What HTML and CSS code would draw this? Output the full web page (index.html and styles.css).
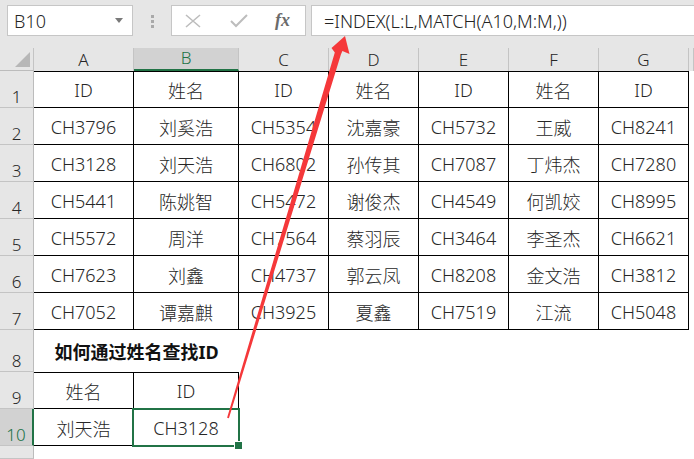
FILE: index.html
```
<!DOCTYPE html>
<html lang="zh">
<head>
    <meta charset="UTF-8">
    <title>INDEX MATCH</title>
    <link rel="stylesheet" href="styles.css">
</head>
<body>
<div class="toolbar">
    <div class="namebox">
        <span>B10</span>
        <svg class="caret" width="8" height="5" viewBox="0 0 8 5"><path d="M0 0H8L4 5Z" fill="#7a7a7a"/></svg>
    </div>
    <div class="grip"><i></i><i></i><i></i></div>
    <div class="fxbox">
        <svg width="16" height="14" viewBox="0 0 16 14"><path d="M1 1L15 13M15 1L1 13" stroke="#bdbdbd" stroke-width="1.6" fill="none"/></svg>
        <svg width="18" height="14" viewBox="0 0 18 14"><path d="M1 7L6 12L17 1" stroke="#bdbdbd" stroke-width="2" fill="none"/></svg>
        <span class="fx">fx</span>
    </div>
    <div class="formula">=INDEX(L:L,MATCH(A10,M:M,))</div>
</div>

<div class="sheet">
    <div class="corner"><span class="tri"></span></div>
    <div class="colhead">A</div>
    <div class="colhead active">B</div>
    <div class="colhead">C</div>
    <div class="colhead">D</div>
    <div class="colhead">E</div>
    <div class="colhead">F</div>
    <div class="colhead">G</div>
    <div class="colhead"></div>

    <div class="rowhead">1</div>
    <div class="c first">ID</div><div class="c first">姓名</div><div class="c first">ID</div><div class="c first">姓名</div><div class="c first">ID</div><div class="c first">姓名</div><div class="c first">ID</div><div class="e"></div>

    <div class="rowhead">2</div>
    <div class="c">CH3796</div><div class="c">刘奚浩</div><div class="c">CH5354</div><div class="c">沈嘉豪</div><div class="c">CH5732</div><div class="c">王威</div><div class="c">CH8241</div><div class="e"></div>

    <div class="rowhead">3</div>
    <div class="c">CH3128</div><div class="c">刘天浩</div><div class="c">CH6802</div><div class="c">孙传其</div><div class="c">CH7087</div><div class="c">丁炜杰</div><div class="c">CH7280</div><div class="e"></div>

    <div class="rowhead">4</div>
    <div class="c">CH5441</div><div class="c">陈姚智</div><div class="c">CH5472</div><div class="c">谢俊杰</div><div class="c">CH4549</div><div class="c">何凯姣</div><div class="c">CH8995</div><div class="e"></div>

    <div class="rowhead">5</div>
    <div class="c">CH5572</div><div class="c">周洋</div><div class="c">CH7564</div><div class="c">蔡羽辰</div><div class="c">CH3464</div><div class="c">李圣杰</div><div class="c">CH6621</div><div class="e"></div>

    <div class="rowhead">6</div>
    <div class="c">CH7623</div><div class="c">刘鑫</div><div class="c">CH4737</div><div class="c">郭云凤</div><div class="c">CH8208</div><div class="c">金文浩</div><div class="c">CH3812</div><div class="e"></div>

    <div class="rowhead">7</div>
    <div class="c">CH7052</div><div class="c">谭嘉麒</div><div class="c">CH3925</div><div class="c">夏鑫</div><div class="c">CH7519</div><div class="c">江流</div><div class="c">CH5048</div><div class="e"></div>

    <div class="rowhead">8</div>
    <div class="title">如何通过姓名查找ID</div>
    <div class="e wide"></div>

    <div class="rowhead">9</div>
    <div class="c left first">姓名</div><div class="c first">ID</div>
    <div class="e wide"></div>

    <div class="rowhead active">10</div>
    <div class="c left">刘天浩</div><div class="c selected">CH3128</div>
    <div class="e wide"></div>

    <div class="rowhead"></div>
    <div class="e full"></div>
</div>

<svg class="arrow" width="694" height="459" viewBox="0 0 694 459">
    <polygon fill="#f5383a" points="345,36 349.5,54 342.4,51 340.9,54.6 228.9,418.3 227.1,417.7 334.8,52.5 331.5,48"/>
</svg>
</body>
</html>
```
FILE: styles.css
```
body {
    margin: 0;
    width: 694px;
    height: 459px;
    overflow: hidden;
    position: relative;
    background: #fff;
    font-family: "Noto Sans", "Noto Sans CJK SC", sans-serif;
    color: #262626;
}
.toolbar {
    height: 48px;
    box-sizing: border-box;
    padding: 5px 0 0 7px;
    background: #e6e6e6;
    display: flex;
    align-items: flex-start;
}
.namebox, .fxbox, .formula {
    height: 31px;
    box-sizing: border-box;
    background: #fff;
    border: 1px solid #c6c6c6;
    display: flex;
    align-items: center;
}
.namebox {
    width: 126px;
    padding: 0 9px 0 6px;
    justify-content: space-between;
    font-size: 18px;
    font-weight: 300;
}
.grip {
    width: 38px;
    display: flex;
    flex-direction: column;
    align-items: center;
    gap: 2px;
    padding-top: 10px;
}
.grip i {
    width: 3px;
    height: 3px;
    background: #a9a9a9;
}
.fxbox {
    width: 135px;
    padding-left: 13px;
    gap: 29px;
}
.fx {
    font-family: "Liberation Serif", serif;
    font-style: italic;
    font-weight: bold;
    font-size: 18px;
    color: #6b6b6b;
    margin-left: -2px;
}
.formula {
    flex: 1;
    margin-left: 5px;
    border-right: none;
    padding-left: 12px;
    font-size: 18px;
    font-weight: 300;
    color: #222;
}
.sheet {
    display: grid;
    grid-template-columns: 34px 100px 105px 90px 90px 90px 90px 90px 1fr;
    grid-template-rows: 23px repeat(7, 37px) 42px 37px 37px 1fr;
    height: 411px;
    font-size: 17px;
    font-weight: 300;
}
.corner, .colhead {
    background: #e6e6e6;
    border-right: 1px solid #c4c4c4;
    box-sizing: border-box;
}
.corner {
    border-bottom: 1px solid #bcbcbc;
    position: relative;
}
.tri {
    position: absolute;
    right: 3px;
    bottom: 3px;
    width: 0;
    height: 0;
    border-left: 15px solid transparent;
    border-bottom: 15px solid #b7b7b7;
}
.colhead {
    display: flex;
    justify-content: center;
    align-items: flex-end;
    line-height: 22px;
}
.colhead.active {
    background: #d2d2d2;
    border-bottom: 2px solid #217346;
    color: #217346;
}
.rowhead {
    background: #e6e6e6;
    border-right: 1px solid #bcbcbc;
    border-bottom: 1px solid #c4c4c4;
    box-sizing: border-box;
    display: flex;
    justify-content: center;
    align-items: flex-end;
    line-height: 20px;
}
.rowhead.active {
    background: #d2d2d2;
    color: #217346;
    border-right: 2px solid #217346;
}
.c {
    box-sizing: border-box;
    border-right: 1px solid #000;
    border-bottom: 1px solid #000;
    display: flex;
    justify-content: center;
    align-items: center;
    font-size: 18px;
    padding-top: 1px;
}
.c.first {
    border-top: 1px solid #000;
}
.c.left {
    border-left: none;
}
.c.selected {
    position: relative;
}
.c.selected::after {
    content: "";
    position: absolute;
    left: -2px;
    top: -1px;
    right: -2px;
    bottom: -2px;
    border: 2px solid #217346;
}
.c.selected::before {
    content: "";
    position: absolute;
    right: -5px;
    bottom: -5px;
    width: 7px;
    height: 7px;
    background: #217346;
    border: 1px solid #fff;
    z-index: 1;
}
.title {
    grid-column: span 2;
    display: flex;
    justify-content: center;
    align-items: flex-end;
    padding-bottom: 8px;
    font-size: 18px;
    font-weight: bold;
    color: #111;
}
.wide {
    grid-column: span 6;
}
.full {
    grid-column: span 8;
}
.arrow {
    position: absolute;
    left: 0;
    top: 0;
    pointer-events: none;
}
```
